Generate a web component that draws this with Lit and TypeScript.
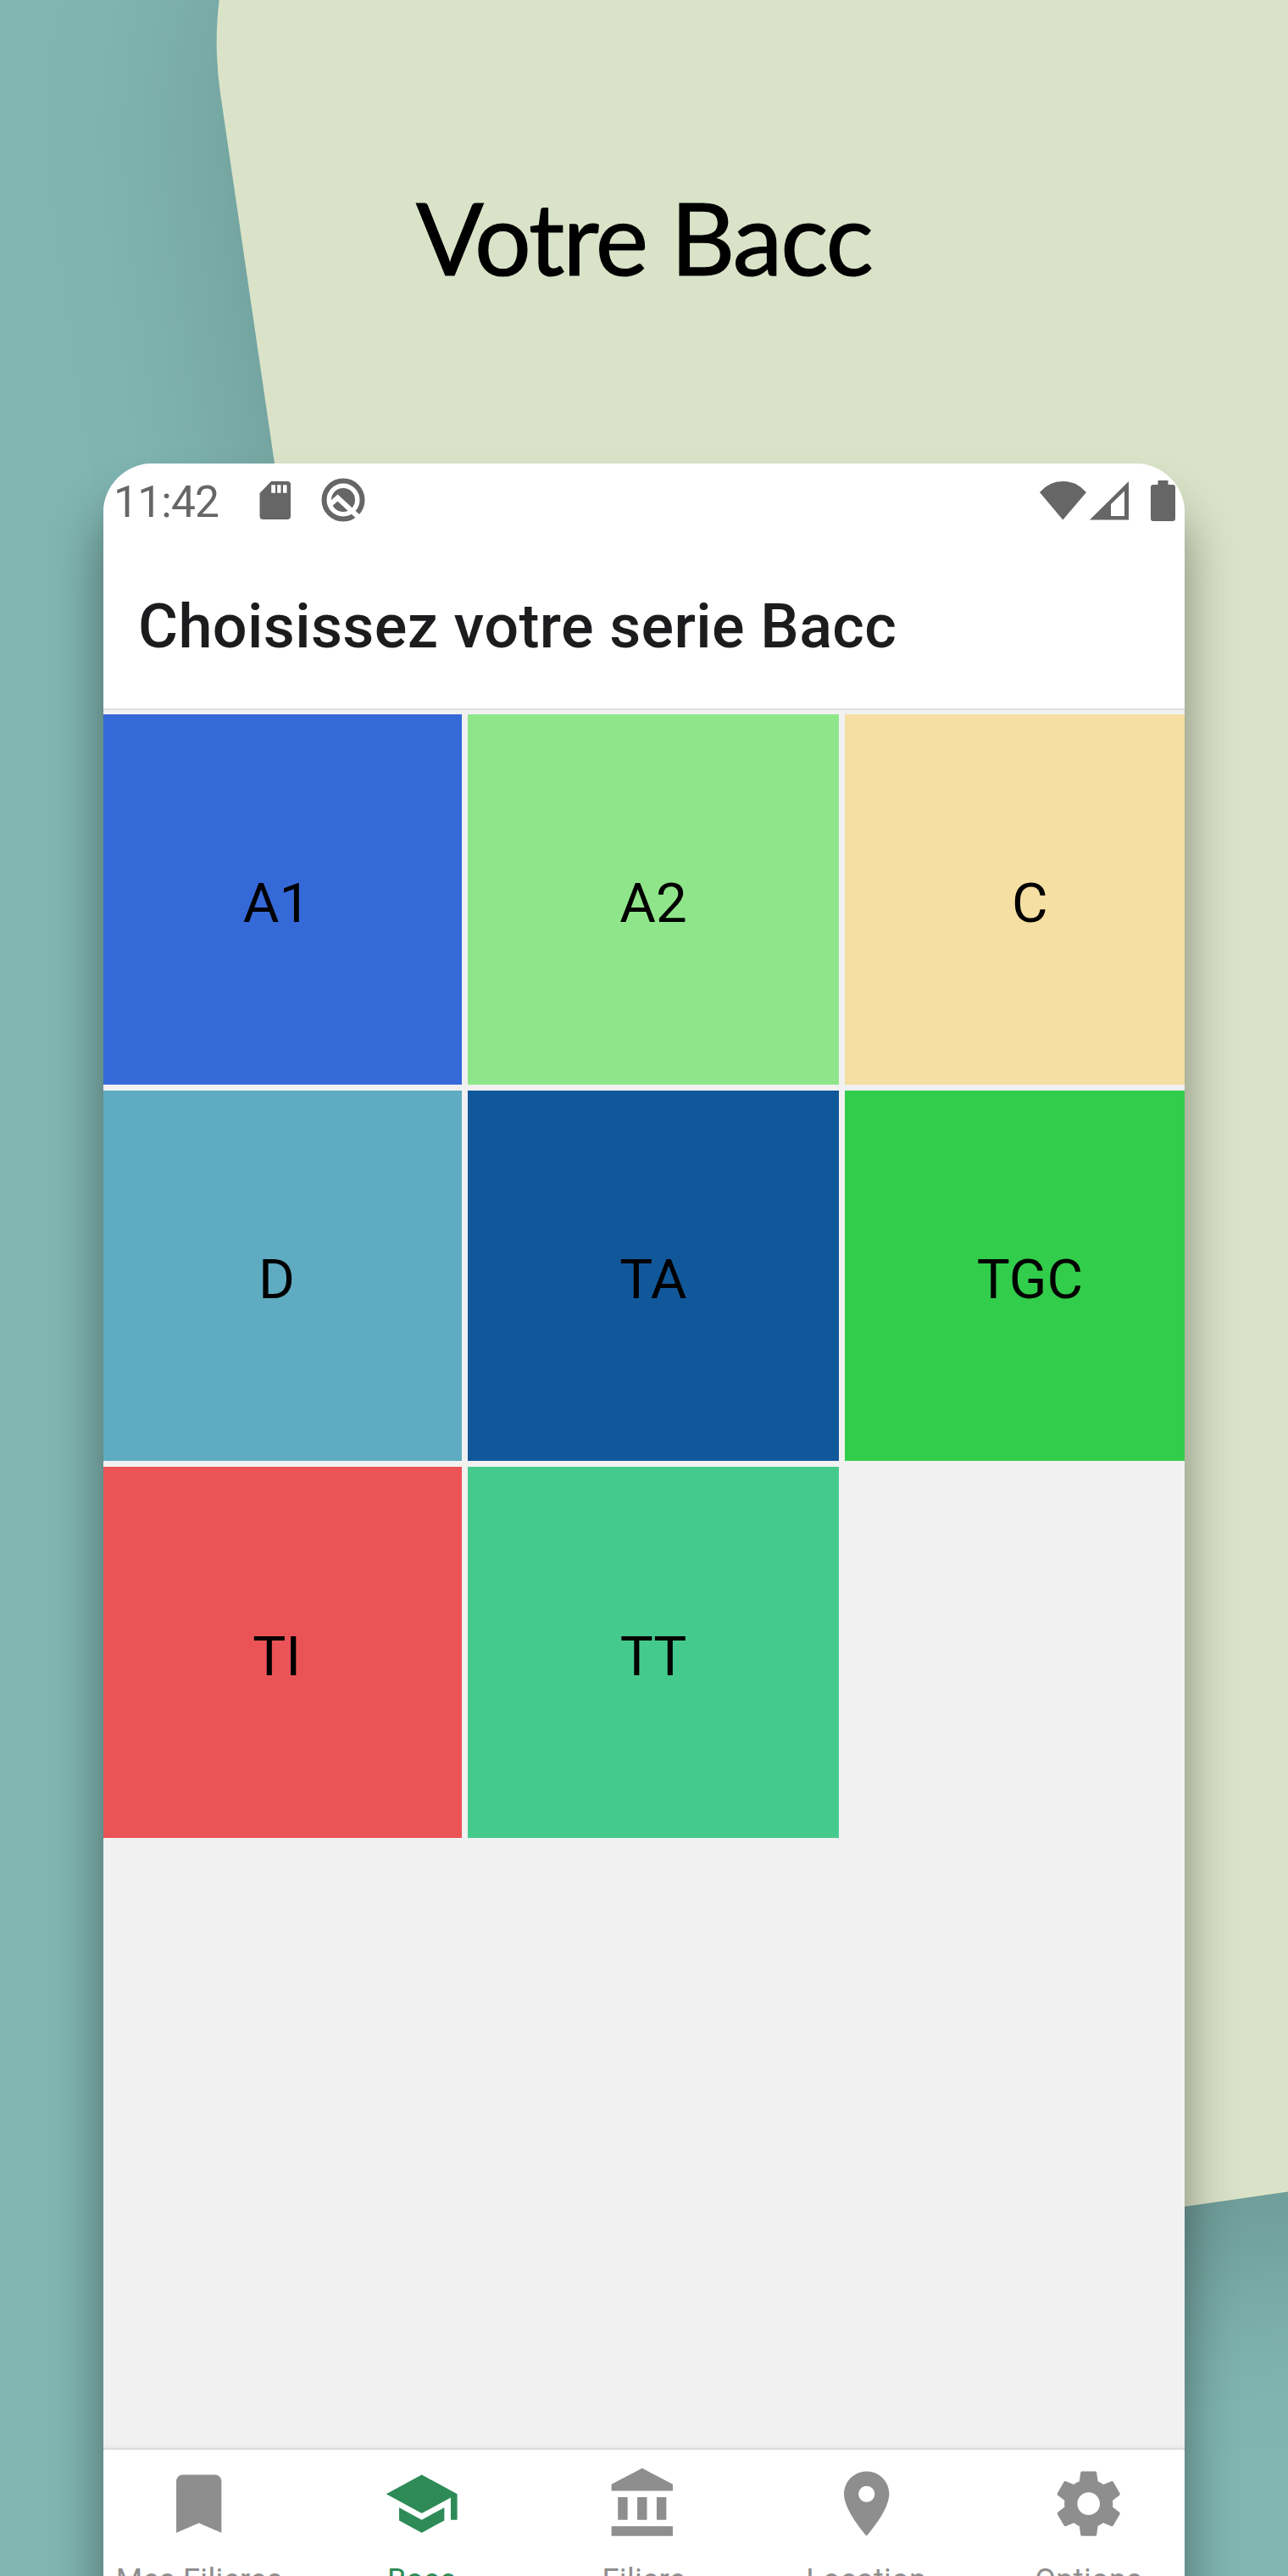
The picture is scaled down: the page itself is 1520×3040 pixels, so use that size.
import { LitElement, html, css, svg } from "lit";
import { customElement } from "lit/decorators.js";

const TILES = [
  { label: "A1", tone: "royal" },
  { label: "A2", tone: "lime" },
  { label: "C", tone: "sand" },
  { label: "D", tone: "teal" },
  { label: "TA", tone: "navy" },
  { label: "TGC", tone: "green" },
  { label: "TI", tone: "red" },
  { label: "TT", tone: "mint" },
];

const TABS = [
  { label: "Mes Filieres", d: "M17 3H7c-1.1 0-2 .9-2 2v16l7-3 7 3V5c0-1.1-.9-2-2-2z" },
  { label: "Bacc", active: true, d: "M5 13.18v4L12 21l7-3.82v-4L12 17l-7-3.82zM12 3L1 9l11 6 9-4.91V17h2V9L12 3z" },
  { label: "Filiere", d: "M4 10v7h3v-7H4zm6 0v7h3v-7h-3zM2 22h19v-3H2v3zm14-12v7h3v-7h-3zm-4.5-9L2 6v2h19V6l-9.5-5z" },
  { label: "Location", d: "M12 2C8.13 2 5 5.13 5 9c0 5.25 7 13 7 13s7-7.75 7-13c0-3.87-3.13-7-7-7zm0 9.5c-1.38 0-2.5-1.12-2.5-2.5s1.12-2.5 2.5-2.5 2.5 1.12 2.5 2.5-1.12 2.5-2.5 2.5z" },
  { label: "Options", d: "M19.43 12.98c.04-.32.07-.64.07-.98s-.03-.66-.07-.98l2.11-1.65c.19-.15.24-.42.12-.64l-2-3.46c-.12-.22-.39-.3-.61-.22l-2.49 1c-.52-.4-1.08-.73-1.69-.98l-.38-2.65C14.46 2.18 14.25 2 14 2h-4c-.25 0-.46.18-.49.42l-.38 2.65c-.61.25-1.17.59-1.69.98l-2.49-1c-.23-.09-.49 0-.61.22l-2 3.46c-.13.22-.07.49.12.64l2.11 1.65c-.04.32-.07.65-.07.98s.03.66.07.98l-2.11 1.65c-.19.15-.24.42-.12.64l2 3.46c.12.22.39.3.61.22l2.49-1c.52.4 1.08.73 1.69.98l.38 2.65c.03.24.24.42.49.42h4c.25 0 .46-.18.49-.42l.38-2.65c.61-.25 1.17-.59 1.69-.98l2.49 1c.23.09.49 0 .61-.22l2-3.46c.12-.22.07-.49-.12-.64l-2.11-1.65zM12 15.5c-1.93 0-3.5-1.57-3.5-3.5s1.57-3.5 3.5-3.5 3.5 1.57 3.5 3.5-1.57 3.5-3.5 3.5z" },
];

const sdCard = svg`<path fill-rule="evenodd" d="M14 1H33a4 4 0 0 1 4 4V42a4 4 0 0 1-4 4H4.500a4 4 0 0 1-4-4V15zM14.200 5.200V14.700H19V5.200zM21.200 5.200V14.700H25.500V5.200zM28 5.200V14.700H32.500V5.200z"/>`;

@customElement("app-root")
export class AppRoot extends LitElement {
  static styles = css`
    :host {
      display: block;
      font-family: Roboto, "Liberation Sans", sans-serif;
    }
    .page {
      position: relative;
      display: flex;
      flex-direction: column;
      align-items: center;
      width: 1520px;
      height: 3040px;
      overflow: hidden;
      background: #80b5b1;
    }
    .backdrop {
      position: absolute;
      inset: 0;
      width: 1520px;
      height: 3040px;
    }
    .headline {
      position: relative;
      box-sizing: border-box;
      flex: none;
      height: 547px;
      margin: 0;
      padding-top: 210px;
      font: 400 118px/140px Lato, sans-serif;
      letter-spacing: -2px;
      -webkit-text-stroke: 1.2px #000;
      color: #000;
      white-space: nowrap;
    }
    .phone {
      position: relative;
      flex: none;
      width: 1276px;
      height: 2600px;
      border-radius: 58px 58px 0 0;
      box-shadow: 0 50px 60px rgba(0, 0, 0, 0.42);
    }
    .screen {
      display: flex;
      flex-direction: column;
      align-items: flex-start;
      height: 100%;
      overflow: hidden;
      border-radius: inherit;
      background: #f1f1f1;
    }
    .status {
      display: flex;
      box-sizing: border-box;
      flex: none;
      width: 100%;
      height: 93px;
      padding: 14px 11px 0 12px;
      align-items: flex-start;
      background: #fff;
      color: #666;
    }
    .status svg {
      display: block;
      flex: none;
      fill: currentColor;
    }
    .clock {
      width: 172px;
      font-size: 51.5px;
      line-height: 64px;
      letter-spacing: -0.8px;
    }
    .sd { margin: 6px 36px 0 0; }
    .q { margin-top: 3px; }
    .wifi { margin: 6px 4px 0 auto; }
    .cell { margin: 6px 26px 0 0; }
    .battery { margin-top: 6px; }
    .bar {
      box-sizing: border-box;
      flex: none;
      width: 100%;
      height: 198px;
      padding: 57.500px 0 0 41px;
      border-bottom: 2px solid #dedede;
      background: #fff;
    }
    .bar h2 {
      margin: 0;
      font-size: 72px;
      line-height: 84px;
      font-weight: 500;
      letter-spacing: 0.38px;
      color: #1c1c1e;
      white-space: nowrap;
    }
    .grid {
      display: grid;
      grid-template-columns: repeat(3, 437.200px);
      grid-auto-rows: 437.200px;
      gap: 7.200px;
      margin: 4.700px 0 0 -14px;
      flex: none;
      height: 2046.300px;
      align-content: start;
    }
    .tile {
      display: flex;
      box-sizing: border-box;
      align-items: center;
      justify-content: center;
      padding-top: 8px;
      font-size: 65.500px;
      color: #000;
    }
    .royal { background: #3569d8; }
    .lime { background: #8fe68a; }
    .sand { background: #f6dfa2; }
    .teal { background: #5fabc1; }
    .navy { background: #11589b; }
    .green { background: #32cd4b; }
    .red { background: #ea5457; }
    .mint { background: #45ca8e; }
    .tabs {
      display: flex;
      flex: none;
      width: 1311.800px;
      height: 240px;
      margin-left: -18px;
      border-top: 2px solid #dcdcdc;
      background: #fff;
      box-shadow: 0 -2px 6px rgba(0, 0, 0, 0.04);
    }
    .tab {
      display: flex;
      flex: 1 1 0;
      flex-direction: column;
      align-items: center;
      padding-top: 18px;
      color: #8e8e8e;
      font-size: 36px;
      line-height: 44px;
      letter-spacing: 0.35px;
      white-space: nowrap;
    }
    .tab svg {
      width: 91.400px;
      height: 91.400px;
      margin-bottom: 23px;
      fill: currentColor;
    }
    .active { color: #2e8b57; }
  `;

  render() {
    return html`
      <div class="page">
        <svg class="backdrop" viewBox="0 0 1520 3040">
          <defs>
            <filter id="soft" filterUnits="userSpaceOnUse" x="-400" y="-900" width="2700" height="4400">
              <feGaussianBlur stdDeviation="100" />
            </filter>
          </defs>
          <path class="shade" filter="url(#soft)" transform="translate(0 90)" fill="#000" fill-opacity="0.155"
            d="M260 110A416 416 0 0 1 671.500-366L1900-400V2532L1050 2654Q640 2713 579 2290Z" />
          <path fill="#dae3c8"
            d="M260 110A416 416 0 0 1 671.500-366L1900-400V2532L1050 2654Q640 2713 579 2290Z" />
        </svg>
        <h1 class="headline">Votre Bacc</h1>
        <div class="phone">
          <div class="screen">
            <div class="status">
              <span class="clock">11:42</span>
              <svg class="sd" width="37" height="47" viewBox="0 0 37 47">${sdCard}</svg>
              <svg class="q" width="52" height="52" viewBox="0 0 52 52">
                <circle cx="26" cy="26" r="22.500" fill="none" stroke="currentColor" stroke-width="6" />
                <circle cx="26" cy="26" r="14" />
                <path d="M11 31L19.500 23.500L46 48" fill="none" stroke="#fff" stroke-width="6" />
              </svg>
              <svg class="wifi" width="55" height="47" viewBox="0 0 55 47">
                <path d="M0 14Q11 1 27.300 1T55 14L27.300 46.500Z" />
              </svg>
              <svg class="cell" width="46" height="47" viewBox="0 0 46 47">
                <path fill-rule="evenodd" d="M0 46.500L46 1V46.500ZM25 28V42H41V12.500Z" />
              </svg>
              <svg class="battery" width="29" height="48" viewBox="0 0 29 48">
                <path d="M8.500 0H20.500V5H26A3 3 0 0 1 29 8V45A3 3 0 0 1 26 48H3A3 3 0 0 1 0 45V8A3 3 0 0 1 3 5H8.500Z" />
              </svg>
            </div>
            <div class="bar"><h2>Choisissez votre serie Bacc</h2></div>
            <div class="grid">
              ${TILES.map((t) => html`<div class="tile ${t.tone}">${t.label}</div>`)}
            </div>
            <div class="tabs">
              ${TABS.map(
                (t) => html`<div class="tab ${t.active ? "active" : ""}">
                  <svg viewBox="0 0 24 24"><path d=${t.d} /></svg>
                  <span>${t.label}</span>
                </div>`
              )}
            </div>
          </div>
        </div>
      </div>
    `;
  }
}
